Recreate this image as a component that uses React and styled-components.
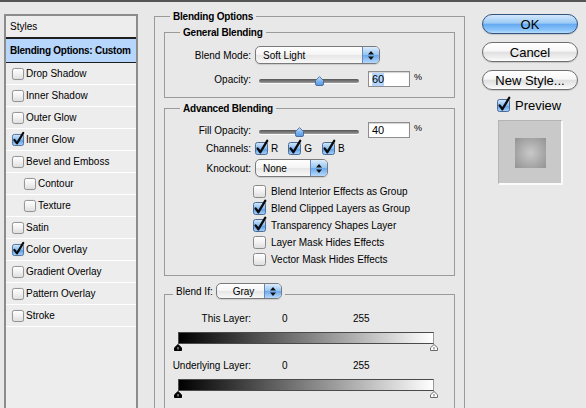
import React, { useId } from "react";
import styled, { createGlobalStyle } from "styled-components";

const GlobalStyle = createGlobalStyle`
  html, body { margin: 0; padding: 0; background: #e8e8e8; }
  body { font-family: "Liberation Sans", Arial, sans-serif; font-size: 10px; color: #000; }
  #root { width: 586px; height: 408px; overflow: hidden; }
  * { box-sizing: border-box; }
`;

const Page = styled.div`
  width: 586px; height: 408px; display: flex; flex-direction: column;
  overflow: hidden; background: #e8e8e8;
`;
const TitleEdge = styled.div`height: 2px; flex: none; background: #555;`;
const Body = styled.div`flex: 1; min-height: 0; display: flex; align-items: stretch;`;

/* ---------- left styles list ---------- */
const StylesPanel = styled.div`
  margin: 12px 0 0 4px; width: 134px; flex: none;
  border: 2px solid #8c8c8c; border-bottom: none; background: #ededed;
`;
const PanelHeader = styled.div`
  height: 23px; line-height: 21px; padding-left: 4px; border-bottom: 2px solid #1e1e1e;
`;
const SelectedRow = styled.div`
  height: 24px; display: flex; align-items: center; padding-left: 4px;
  background: #b7d6fc; font-weight: bold; letter-spacing: -0.25px;
  border-bottom: 1px solid #1e1e1e;
`;
const StyleRow = styled.div`
  height: 22px; display: flex; align-items: center; gap: 2px;
  padding-left: ${(p) => (p.$indent ? 18 : 6)}px; border-bottom: 1px solid #fff;
`;

/* ---------- main column ---------- */
const Main = styled.div`margin: 8px 0 0 16px; width: 311px; flex: none; align-self: flex-start;`;
const Group = styled.fieldset`
  margin: ${(p) => p.$mt || 0}px 0 0; padding: ${(p) => p.$pad};
  border: 1px solid #9a9a9a; min-width: 0;
`;
const Legend = styled.legend`
  margin-left: ${(p) => p.$ml}px; padding: 0 3px ${(p) => p.$pb || 0}px;
  font-weight: ${(p) => (p.$plain ? "normal" : "bold")}; line-height: 13px;
  letter-spacing: ${(p) => (p.$plain ? 0 : -0.2)}px;
`;
const LegendInner = styled.span`display: flex; align-items: center; gap: 3px;`;

const Row = styled.div`
  display: flex; align-items: center; height: ${(p) => p.$h}px;
  margin-top: ${(p) => p.$mt || 0}px;
`;
const Label = styled.span`width: 86px; flex: none; text-align: right; margin-right: 4px; white-space: nowrap;`;

const PopupBox = styled.div`
  width: ${(p) => p.$w}px; height: ${(p) => p.$h}px; display: flex; flex: none;
  border: 1px solid #7a7a7a; border-radius: 5px; overflow: hidden;
  background: linear-gradient(#ffffff, #f4f4f4 50%, #e6e6e6 51%, #f8f8f8);
  box-shadow: 0 1px 1px rgba(0, 0, 0, 0.12);
`;
const PopupText = styled.span`
  flex: 1; display: flex; align-items: center; padding-left: ${(p) => p.$pl}px; font-weight: normal;
`;
const PopupArrows = styled.span`
  width: 17px; flex: none; display: flex; align-items: center; justify-content: center;
  border-left: 1px solid #6b87b3;
  background: linear-gradient(#dcecfc, #94c4f2 50%, #6aa9ec 51%, #b6d9fb);
`;

const SliderWrap = styled.div`
  position: relative; width: 108px; height: 16px; flex: none;
  display: flex; align-items: center; padding: 3px 4px 0;
`;
const Track = styled.div`
  flex: 1; height: 4px; border-radius: 2px;
  background: linear-gradient(#545454, #9c9c9c);
  box-shadow: 0 1px 0 #fafafa;
`;
const Thumb = styled.svg`position: absolute; top: 5px;`;

const NumField = styled.div`
  width: 42px; height: 16px; margin-left: 5px; flex: none; background: #fff;
  border: 1px solid #8e8e8e; box-shadow: inset 0 1px 1px rgba(0, 0, 0, 0.18);
  display: flex; align-items: center; padding-left: 3px; font-size: 11px;
`;
const Sel = styled.span`background: ${(p) => (p.$sel ? "#b5d5ff" : "transparent")}; line-height: 13px;`;
const Pct = styled.span`margin-left: 4px; font-size: 9px; align-self: flex-start; margin-top: 1px;`;

const Channels = styled.div`display: flex; align-items: center; gap: 10px;`;
const Chan = styled.span`display: flex; align-items: center; gap: 3px;`;

const CheckList = styled.div`margin: 6px 0 0 88px; display: flex; flex-direction: column;`;
const CheckItem = styled.div`height: 17px; display: flex; align-items: center; gap: 5px; white-space: nowrap;`;

const ValueRow = styled.div`display: flex; align-items: center; height: 12px; margin-top: ${(p) => p.$mt}px;`;
const Val = styled.span`width: ${(p) => p.$w}px; margin-left: ${(p) => p.$ml || 0}px;`;
const GradBar = styled.div`
  margin: 8px 0 0 13px; width: 256px; height: 12px;
  border: 1px solid #4a4a4a; border-right-color: #9a9a9a;
  background: linear-gradient(to right, #000, #fff);
`;
const Markers = styled.div`
  margin-left: 9px; width: 264px; height: 7px; display: flex; justify-content: space-between;
`;

/* ---------- right column ---------- */
const Side = styled.div`
  margin: 12px 0 0 17px; width: 96px; flex: none; align-self: flex-start;
  display: flex; flex-direction: column; gap: 8px;
`;
const AquaButton = styled.button`
  width: 96px; height: 20px; padding: 0; border-radius: 10px; color: #000;
  font: 13px "Liberation Sans", Arial, sans-serif;
  border: 1px solid ${(p) => (p.$primary ? "#35537f" : "#6e6e6e")};
  background: ${(p) =>
    p.$primary
      ? "linear-gradient(#d4e8fc, #9ccaf5 45%, #66aaf0 52%, #8cc6fa 85%, #b9defd)"
      : "linear-gradient(#ffffff, #f6f6f6 45%, #e0e0e0 52%, #f1f1f1 85%, #ffffff)"};
  box-shadow: 0 1px 1px rgba(0, 0, 0, 0.15);
`;
const PreviewRow = styled.div`
  display: flex; align-items: center; gap: 5px; padding-left: 15px; margin-top: 1px;
  height: 13px; font-size: 13px;
`;
const PreviewBox = styled.div`
  margin-left: 16px; width: 65px; height: 65px; display: flex; align-items: center; justify-content: center;
  background: #c9c9c9; border-top: 1px solid #b4b4b4; border-left: 1px solid #b4b4b4;
  border-right: 2px solid #fbfbfb; border-bottom: 2px solid #fbfbfb;
`;
const Swatch = styled.div`
  width: 31px; height: 30px; margin-top: 1px;
  background: radial-gradient(circle at 50% 50%, #c9c9c9 0%, #b0b0b0 45%, #939393 100%);
`;

/* ---------- drawings ---------- */
function Check({ on, size = 13 }) {
  const id = useId().replace(/:/g, "");
  return (
    <svg width={size} height={size} viewBox="0 0 13 13" style={{ overflow: "visible", flex: "none" }}>
      <defs>
        <linearGradient id={`u${id}`} x1="0" y1="0" x2="0" y2="1">
          <stop offset="0" stopColor="#ffffff" />
          <stop offset="0.5" stopColor="#f1f1f1" />
          <stop offset="1" stopColor="#dcdcdc" />
        </linearGradient>
        <linearGradient id={`c${id}`} x1="0" y1="0" x2="0" y2="1">
          <stop offset="0" stopColor="#d6eafc" />
          <stop offset="0.5" stopColor="#86bbf0" />
          <stop offset="0.55" stopColor="#5d9fe8" />
          <stop offset="1" stopColor="#a9d3fa" />
        </linearGradient>
      </defs>
      <rect x="0.5" y="0.5" width="12" height="12" rx="2"
        fill={on ? `url(#c${id})` : `url(#u${id})`} stroke={on ? "#4b6b98" : "#8a8a8a"} />
      {on && (
        <path d="M2.6 6.4 L5.4 10.2 L12.2 -1.2" fill="none" stroke="#0c0c0c" strokeWidth="2.3"
          strokeLinecap="round" strokeLinejoin="round" />
      )}
    </svg>
  );
}

function Arrows() {
  return (
    <svg width="6" height="9" viewBox="0 0 6 9">
      <path d="M3 0 L6 3.5 H0 Z M0 5.5 H6 L3 9 Z" fill="#111" />
    </svg>
  );
}

function Popup({ w, h = 18, pl = 7, children }) {
  return (
    <PopupBox $w={w} $h={h}>
      <PopupText $pl={pl}>{children}</PopupText>
      <PopupArrows><Arrows /></PopupArrows>
    </PopupBox>
  );
}

function Slider({ value }) {
  const id = useId().replace(/:/g, "");
  const left = 4 + value - 4.5;
  return (
    <SliderWrap>
      <Track />
      <Thumb width="9" height="10" viewBox="0 0 9 10" style={{ left }}>
        <defs>
          <linearGradient id={`t${id}`} x1="0" y1="0" x2="0" y2="1">
            <stop offset="0" stopColor="#d8ebfd" />
            <stop offset="0.5" stopColor="#7fb6ef" />
            <stop offset="1" stopColor="#5796e0" />
          </linearGradient>
        </defs>
        <path d="M4.5 0.6 L8.5 4.6 V8 Q8.5 9.5 7 9.5 H2 Q0.5 9.5 0.5 8 V4.6 Z"
          fill={`url(#t${id})`} stroke="#43679a" strokeWidth="0.9" />
      </Thumb>
    </SliderWrap>
  );
}

function Marker({ dark }) {
  return (
    <svg width="8" height="7" viewBox="0 0 8 7">
      <path d="M4 0.5 L7.5 3.8 V6.5 H0.5 V3.8 Z" fill={dark ? "#000" : "#fff"} stroke={dark ? "#000" : "#6a6a6a"} />
      {!dark && <path d="M4 3 V5.5" stroke="#6a6a6a" />}
      {dark && <path d="M4 3 V5.5" stroke="#fff" strokeWidth="0.8" />}
    </svg>
  );
}

const styleItems = [
  { name: "Drop Shadow" },
  { name: "Inner Shadow" },
  { name: "Outer Glow" },
  { name: "Inner Glow", on: true },
  { name: "Bevel and Emboss" },
  { name: "Contour", indent: true },
  { name: "Texture", indent: true },
  { name: "Satin" },
  { name: "Color Overlay", on: true },
  { name: "Gradient Overlay" },
  { name: "Pattern Overlay" },
  { name: "Stroke" },
];

const advancedChecks = [
  { name: "Blend Interior Effects as Group" },
  { name: "Blend Clipped Layers as Group", on: true },
  { name: "Transparency Shapes Layer", on: true },
  { name: "Layer Mask Hides Effects" },
  { name: "Vector Mask Hides Effects" },
];

export default function App() {
  return (
    <Page>
      <GlobalStyle />
      <TitleEdge />
      <Body>
        <StylesPanel>
          <PanelHeader>Styles</PanelHeader>
          <SelectedRow>Blending Options: Custom</SelectedRow>
          {styleItems.map((s) => (
            <StyleRow key={s.name} $indent={s.indent}>
              <Check on={s.on} size={12} />
              <span>{s.name}</span>
            </StyleRow>
          ))}
        </StylesPanel>

        <Main>
          <Group $pad="3px 9px 30px 9px">
            <Legend $ml={6}>Blending Options</Legend>

            <Group $pad="7px 0 10px 0">
              <Legend $ml={15}>General Blending</Legend>
              <Row $h={18}>
                <Label>Blend Mode:</Label>
                <Popup w={125}>Soft Light</Popup>
              </Row>
              <Row $h={16} $mt={7}>
                <Label>Opacity:</Label>
                <Slider value={60} />
                <NumField><Sel $sel>60</Sel></NumField>
                <Pct>%</Pct>
              </Row>
            </Group>

            <Group $mt={4} $pad="7px 0 7px 0">
              <Legend $ml={15}>Advanced Blending</Legend>
              <Row $h={16}>
                <Label>Fill Opacity:</Label>
                <Slider value={40} />
                <NumField><Sel>40</Sel></NumField>
                <Pct>%</Pct>
              </Row>
              <Row $h={13} $mt={4}>
                <Label>Channels:</Label>
                <Channels>
                  <Chan><Check on /><span>R</span></Chan>
                  <Chan><Check on /><span>G</span></Chan>
                  <Chan><Check on /><span>B</span></Chan>
                </Channels>
              </Row>
              <Row $h={18} $mt={4}>
                <Label>Knockout:</Label>
                <Popup w={73}>None</Popup>
              </Row>
              <CheckList>
                {advancedChecks.map((c) => (
                  <CheckItem key={c.name}>
                    <Check on={c.on} />
                    <span>{c.name}</span>
                  </CheckItem>
                ))}
              </CheckList>
            </Group>

            <Group $mt={7} $pad="6px 0 14px 0">
              <Legend $ml={8} $pb={7} $plain>
                <LegendInner>
                  <span>Blend If:</span>
                  <Popup w={66} h={16} pl={16}>Gray</Popup>
                </LegendInner>
              </Legend>
              <ValueRow $mt={0}>
                <Label>This Layer:</Label>
                <Val $w={71} $ml={27}>0</Val>
                <Val $w={40}>255</Val>
              </ValueRow>
              <GradBar />
              <Markers><Marker dark /><Marker /></Markers>
              <ValueRow $mt={8}>
                <Label>Underlying Layer:</Label>
                <Val $w={71} $ml={27}>0</Val>
                <Val $w={40}>255</Val>
              </ValueRow>
              <GradBar />
              <Markers><Marker dark /><Marker /></Markers>
            </Group>
          </Group>
        </Main>

        <Side>
          <AquaButton $primary>OK</AquaButton>
          <AquaButton>Cancel</AquaButton>
          <AquaButton>New Style...</AquaButton>
          <PreviewRow>
            <Check on />
            <span>Preview</span>
          </PreviewRow>
          <PreviewBox><Swatch /></PreviewBox>
        </Side>
      </Body>
    </Page>
  );
}
